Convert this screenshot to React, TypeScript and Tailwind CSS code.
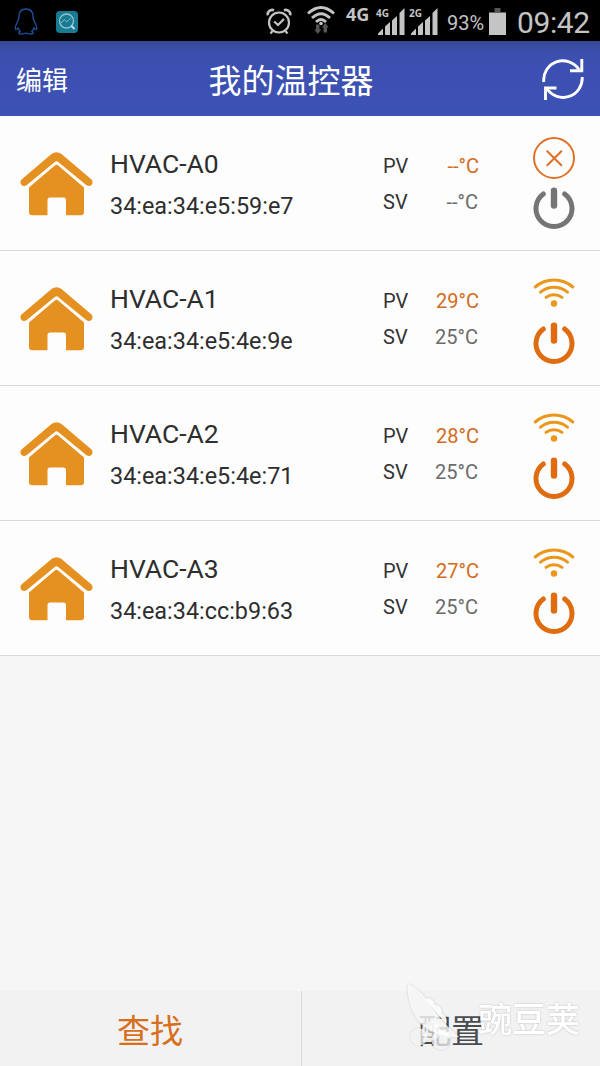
import React from "react";

type Device = {
  name: string;
  mac: string;
  pv: string;
  sv: string;
  online: boolean;
};

const devices: Device[] = [
  { name: "HVAC-A0", mac: "34:ea:34:e5:59:e7", pv: "--°C", sv: "--°C", online: false },
  { name: "HVAC-A1", mac: "34:ea:34:e5:4e:9e", pv: "29°C", sv: "25°C", online: true },
  { name: "HVAC-A2", mac: "34:ea:34:e5:4e:71", pv: "28°C", sv: "25°C", online: true },
  { name: "HVAC-A3", mac: "34:ea:34:cc:b9:63", pv: "27°C", sv: "25°C", online: true },
];

const PenguinIcon = () => (
  <svg className="w-6 h-[27px]" viewBox="0 0 24 27" fill="none" stroke="#1d519b" strokeWidth="1.4" strokeLinejoin="round">
    <path d="M12 1C7.500 1 5 4 5 8.500C5 11 4.500 12 3.500 14C1.500 17.500 .8 20.500 1.800 21.500C2.600 22 3.600 20.500 4.200 19.800C4.500 21.500 5.300 22.700 6.300 23.500C4.800 24 4.200 26 6.500 26C9 26 11 25.800 12 25C13 25.800 15 26 17.500 26C19.800 26 19.200 24 17.700 23.500C18.700 22.700 19.500 21.500 19.800 19.800C20.400 20.500 21.400 22 22.200 21.500C23.200 20.500 22.500 17.500 20.500 14C19.500 12 19 11 19 8.500C19 4 16.500 1 12 1Z" />
  </svg>
);

const ScanAppIcon = () => (
  <svg className="w-[22px] h-[22px]" viewBox="0 0 22 22" fill="none" strokeLinecap="round" strokeLinejoin="round">
    <rect width="22" height="22" rx="4" fill="#177b93" />
    <circle cx="10.500" cy="10" r="7" stroke="#93c3cd" strokeWidth="1.300" />
    <path d="M15.800 15.300L18 17.500" stroke="#b9dbe1" strokeWidth="2" />
    <path d="M5 12L8.500 8.500L10.500 11L14.500 7.500" stroke="#84b9c5" />
  </svg>
);

const AlarmIcon = () => (
  <svg className="w-[26px] h-[27px]" viewBox="0 0 26 27" fill="none" stroke="#c4c4c4" strokeWidth="2.2">
    <circle cx="13" cy="14.500" r="10" />
    <path d="M2 7.200C.8 4.500 4.200 .8 8 2.200" strokeWidth="2.600" />
    <path d="M24 7.200C25.200 4.500 21.800 .8 18 2.200" strokeWidth="2.600" />
    <path d="M8.200 13.500L12 17L18 11" />
    <path d="M6.500 23L4.500 25.500M19.500 23L21.500 25.500" />
  </svg>
);

const StatusWifiIcon = () => (
  <svg className="w-7 h-[30px]" viewBox="0 0 28 30" fill="none">
    <g stroke="#c4c4c4" strokeWidth="2.800">
      <path d="M1 8.500Q14 -3.500 27 8.500" />
      <path d="M5 13Q14 4.500 23 13" />
      <path d="M9 17Q14 12 19 17" />
    </g>
    <circle cx="14" cy="18.500" r="1.800" fill="#c4c4c4" />
    <path d="M9 19.500H12.500V24.500H14.200L10.800 29L7.300 24.500H9Z" fill="#555" />
    <path d="M16.500 27.500H20V22.500H21.700L18.200 18L14.800 22.500H16.500Z" fill="#555" />
  </svg>
);

const SignalIcon = ({ label }: { label: string }) => (
  <div className="relative w-[28px] h-[28px]">
    <svg className="w-[28px] h-[28px]" viewBox="0 0 28 28" fill="#c4c4c4">
      <path d="M1 27V25.500L6 20.500V27Z" />
      <path d="M8 27V18.500L13 14V27Z" />
      <path d="M15 27V12.500L20 8V27Z" />
      <path d="M22.500 27V5L27.500 0V27Z" />
    </svg>
    <span className="absolute -left-px -top-[2px] text-[10px] leading-[14px] font-bold font-['Noto_Sans']">{label}</span>
  </div>
);

const BatteryIcon = () => (
  <svg className="w-[17px] h-[27px]" viewBox="0 0 17 27">
    <rect x="5.500" width="6" height="4" fill="#555" />
    <rect y="4.500" width="17" height="22.500" fill="#c4c4c4" />
  </svg>
);

const RefreshIcon = () => (
  <svg className="w-[42px] h-[44px]" viewBox="0 0 42 44" fill="none" stroke="#fff" strokeWidth="2.900">
    <path d="M1.800 25A19.200 19.200 0 0 1 37 12.500" />
    <path d="M39.800 2V13.700H28" />
    <path d="M40.200 20A19.200 19.200 0 0 1 5 31.800" />
    <path d="M14.500 31H3.500V43" />
  </svg>
);

const HouseIcon = () => (
  <svg className="w-[73px] h-[64px]" viewBox="0 0 73 64" fill="#e59122">
    <path d="M31.800 1.800Q36.500 -1.500 41.200 1.800L71.500 27.500C74.500 31 70.500 36 66.500 33.300L38.200 9.900Q36.500 8.500 34.800 9.900L6.500 33.300C2.500 36 -1.500 31 1.500 27.500Z" />
    <path d="M9 35.500L34.500 13.700Q36.500 12 38.500 13.700L64 35.500V60Q64 63.300 60.700 63.300H46V48Q46 45.500 43.500 45.500H30Q27.500 45.500 27.500 48V63.300H12.300Q9 63.300 9 60Z" />
  </svg>
);

const OfflineIcon = () => (
  <svg className="w-[42px] h-[42px]" viewBox="0 0 42 42" fill="none" stroke="#df7127" strokeWidth="2" strokeLinecap="round">
    <circle cx="21" cy="21" r="20" />
    <path d="M14.300 14.300L28.300 28.300M28.300 14.300L14.300 28.300" />
  </svg>
);

const WifiIcon = () => (
  <svg className="w-[42px] h-[42px]" viewBox="0 0.8 42 42" fill="none" stroke="#eb971c" strokeWidth="3" strokeLinecap="round">
    <path d="M2.200 15.800A29 29 0 0 1 39.800 15.800" />
    <path d="M7.500 21A21 21 0 0 1 34.500 21" />
    <path d="M13 26.200A13 13 0 0 1 29 26.200" />
    <circle cx="21" cy="32.300" r="3.200" fill="#eb971c" stroke="none" />
  </svg>
);

const PowerIcon = ({ on }: { on: boolean }) => (
  <svg className="w-[42px] h-[42px]" viewBox="0 0 42 42" fill="none" stroke={on ? "#e06c10" : "#757575"} strokeWidth="5" strokeLinecap="round">
    <path d="M10.300 7A18 18 0 1 0 31.700 7" />
    <path d="M21 3.800V18.500" strokeWidth="6.400" />
  </svg>
);

const DeviceRow: React.FC<{ device: Device }> = ({ device }) => (
  <div className="h-[135px] flex items-start bg-[#fdfdfd] border-b border-[#dadada]">
    <div className="w-[110px] pl-5 pt-9">
      <HouseIcon />
    </div>
    <div className="w-[273px] pt-[27px] text-[#2e2e2e]">
      <div className="text-[26.5px] leading-[42px]">{device.name}</div>
      <div className="text-[23.4px] leading-[42px]">{device.mac}</div>
    </div>
    <div className="w-[96px] pt-8 text-[20px] leading-9 text-[#333]">
      <div className="flex justify-between">
        <span>PV</span>
        <span className="text-[#d26c20]">{device.pv}</span>
      </div>
      <div className="flex justify-between">
        <span>SV</span>
        <span className="text-[#6b6b6b] pr-px">{device.sv}</span>
      </div>
    </div>
    <div className="ml-[54px] pt-[21px] flex flex-col gap-2">
      {device.online ? <WifiIcon /> : <OfflineIcon />}
      <PowerIcon on={device.online} />
    </div>
  </div>
);

// Pea pod logo with its wordmark, laid over the bottom bar
const Watermark = () => (
  <div className="absolute left-[404px] top-[-9px] flex items-start text-white pointer-events-none drop-shadow-[0_0_1px_rgba(0,0,0,0.2)]">
    <svg className="w-[74px] h-[68px]" viewBox="0 0 74 68" fill="#fff">
      <path d="M21 17Q28 14 31 23Q38 23 38 32Q44 34 42 42Z" fillOpacity=".9" />
      <circle cx="15" cy="55" r="8.500" fillOpacity=".7" />
      <circle cx="27" cy="49" r="9.500" fillOpacity=".6" />
      <circle cx="37" cy="58" r="9.500" fillOpacity=".7" />
      <path d="M4 2C12 5 19 12 25 21C32 32 40 42 55 55C43 56 28 51 18 43C9 34 2 15 4 2Z" fillOpacity=".8" />
    </svg>
    <span className="pt-[18px] text-[34px] leading-[40px] font-medium">豌豆荚</span>
  </div>
);

export default function App() {
  return (
    <div className="w-[600px] h-[1066px] flex flex-col overflow-hidden bg-[#f6f6f6] font-['Roboto','Noto_Sans_CJK_SC',sans-serif]">
      {/* Status bar */}
      <div className="h-[41px] shrink-0 flex items-start bg-black text-[#c4c4c4] whitespace-nowrap">
        <div className="pl-[14px] pt-2"><PenguinIcon /></div>
        <div className="pl-[18px] pt-[11px]"><ScanAppIcon /></div>
        <div className="pl-[188px] pt-2"><AlarmIcon /></div>
        <div className="pl-[15px] pt-[5px]"><StatusWifiIcon /></div>
        <span className="w-[31px] ml-[11px] pt-[2px] text-[18px] leading-6 font-bold font-['Noto_Sans']">4G</span>
        <div className="pt-2"><SignalIcon label="4G" /></div>
        <div className="pl-[5px] pt-2"><SignalIcon label="2G" /></div>
        <span className="w-[51px] pl-[9px] pt-[11px] text-[20px] leading-6">93%</span>
        <div className="pt-2"><BatteryIcon /></div>
        <span className="pl-[11px] pt-[5px] text-[30px] leading-9 tracking-[-0.4px]">09:42</span>
      </div>

      {/* Title bar */}
      <div className="h-[75px] shrink-0 grid grid-cols-[190px_1fr_190px] items-center bg-linear-to-b from-[#394894] via-[#3a4fae] via-15% to-[#3d52b5] text-white">
        <button className="pl-4 pt-[5px] text-left text-[26px] leading-9">编辑</button>
        <h1 className="pt-[6px] pr-[18px] text-center text-[33px] leading-10">我的温控器</h1>
        <button className="pr-4 flex justify-end"><RefreshIcon /></button>
      </div>

      {/* Thermostats */}
      <div className="flex-1">
        {devices.map((d) => (
          <DeviceRow key={d.mac} device={d} />
        ))}
      </div>

      {/* Bottom actions */}
      <div className="relative h-[75px] shrink-0 flex items-center bg-[#f2f2f2] text-[33px] leading-10">
        <button className="w-[302px] h-full pt-[7px] pr-px border-r border-[#d8d8d8] text-[#d86f1d]">查找</button>
        <button className="flex-1 h-full pt-[7px] text-[#494d51]">配置</button>
        <Watermark />
      </div>
    </div>
  );
}
